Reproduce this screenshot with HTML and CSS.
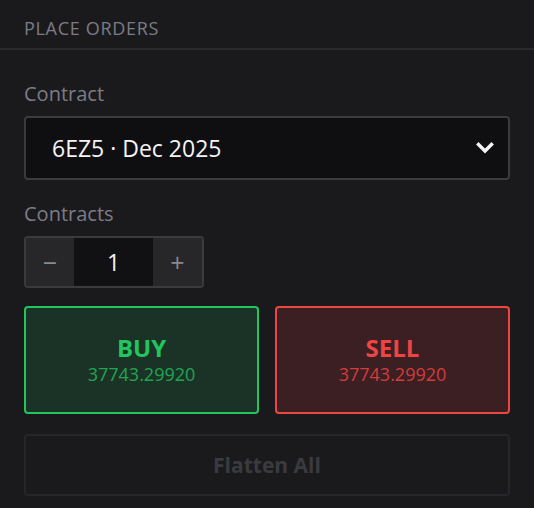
FILE: index.html
```html
<!DOCTYPE html>
<html lang="en">

<head>
    <meta charset="UTF-8">
    <meta name="viewport" content="width=device-width, initial-scale=1.0">
    <title>Place Orders</title>
    <link rel="stylesheet" href="styles.css">
</head>

<body>
    <div class="panel">
        <div class="panel-header">Place Orders</div>
        <div class="panel-body">
            <label class="field-label">Contract</label>
            <div class="select">
                <span>6EZ5 · Dec 2025</span>
                <svg class="chevron" width="18" height="12" viewBox="0 0 18 12">
                    <path d="M2.5 2.5 L9 9 L15.5 2.5" fill="none" stroke="#f4f4f5" stroke-width="3.4"
                        stroke-linecap="square" />
                </svg>
            </div>

            <label class="field-label second">Contracts</label>
            <div class="stepper">
                <button class="step">−</button>
                <div class="qty">1</div>
                <button class="step">+</button>
            </div>

            <div class="order-buttons">
                <button class="order buy">
                    <span class="side">BUY</span>
                    <span class="price">37743.29920</span>
                </button>
                <button class="order sell">
                    <span class="side">SELL</span>
                    <span class="price">37743.29920</span>
                </button>
            </div>

            <button class="flatten" disabled>Flatten All</button>
        </div>
    </div>
</body>

</html>
```

FILE: styles.css
```css
body {
    font-family: 'Open Sans', 'Noto Sans', sans-serif;
    background: #1a1a1d;
    color: #f4f4f5;
    margin: 0;
    padding: 0;
}

.panel-header {
    height: 50px;
    box-sizing: border-box;
    padding: 8px 24px 0;
    display: flex;
    align-items: center;
    border-bottom: 2px solid #2a2a2e;
    font-size: 18px;
    letter-spacing: 0.7px;
    text-transform: uppercase;
    color: #7c7c86;
}

.panel-body {
    padding: 30px 24px 12px;
    display: flex;
    flex-direction: column;
}

.field-label {
    font-size: 20px;
    line-height: 27px;
    color: #7c7c86;
    margin-bottom: 9px;
}

.field-label.second {
    margin-top: 20px;
}

.select {
    height: 64px;
    box-sizing: border-box;
    border: 2px solid #3a3a3f;
    border-radius: 4px;
    background: #0f0f11;
    display: flex;
    align-items: center;
    justify-content: space-between;
    padding: 0 14px 0 26px;
    font-size: 23px;
}

.stepper {
    display: flex;
    width: 180px;
    height: 52px;
    box-sizing: border-box;
    border: 2px solid #3a3a3f;
    border-radius: 4px;
    overflow: hidden;
}

.step {
    width: 48px;
    border: none;
    background: #27272a;
    color: #8a8a93;
    font-family: inherit;
    font-size: 25px;
    padding: 0;
}

.step:last-child {
    width: auto;
    flex: 1;
}

.qty {
    width: 79px;
    background: #111113;
    display: flex;
    align-items: center;
    justify-content: center;
    font-size: 23px;
    color: #f4f4f5;
}

.order-buttons {
    display: flex;
    gap: 16px;
    margin-top: 18px;
}

.order {
    flex: 1;
    height: 108px;
    border-radius: 4px;
    border: 2px solid;
    display: flex;
    flex-direction: column;
    align-items: center;
    justify-content: center;
    font-family: inherit;
    padding: 0;
}

.order .side {
    font-size: 24px;
    font-weight: bold;
    line-height: 28px;
}

.order .price {
    font-size: 18px;
    line-height: 24px;
}

.buy {
    background: #1b3327;
    border-color: #22c55e;
    color: #22c55e;
}

.buy .price {
    color: #1fa552;
}

.sell {
    background: #3c1f22;
    border-color: #ef4444;
    color: #ef4444;
}

.sell .price {
    color: #d23c3c;
}

.flatten {
    margin-top: 20px;
    height: 62px;
    border: 2px solid #25252a;
    border-radius: 4px;
    background: transparent;
    color: #3a3a3f;
    font-family: inherit;
    font-size: 21px;
    font-weight: bold;
}
```
